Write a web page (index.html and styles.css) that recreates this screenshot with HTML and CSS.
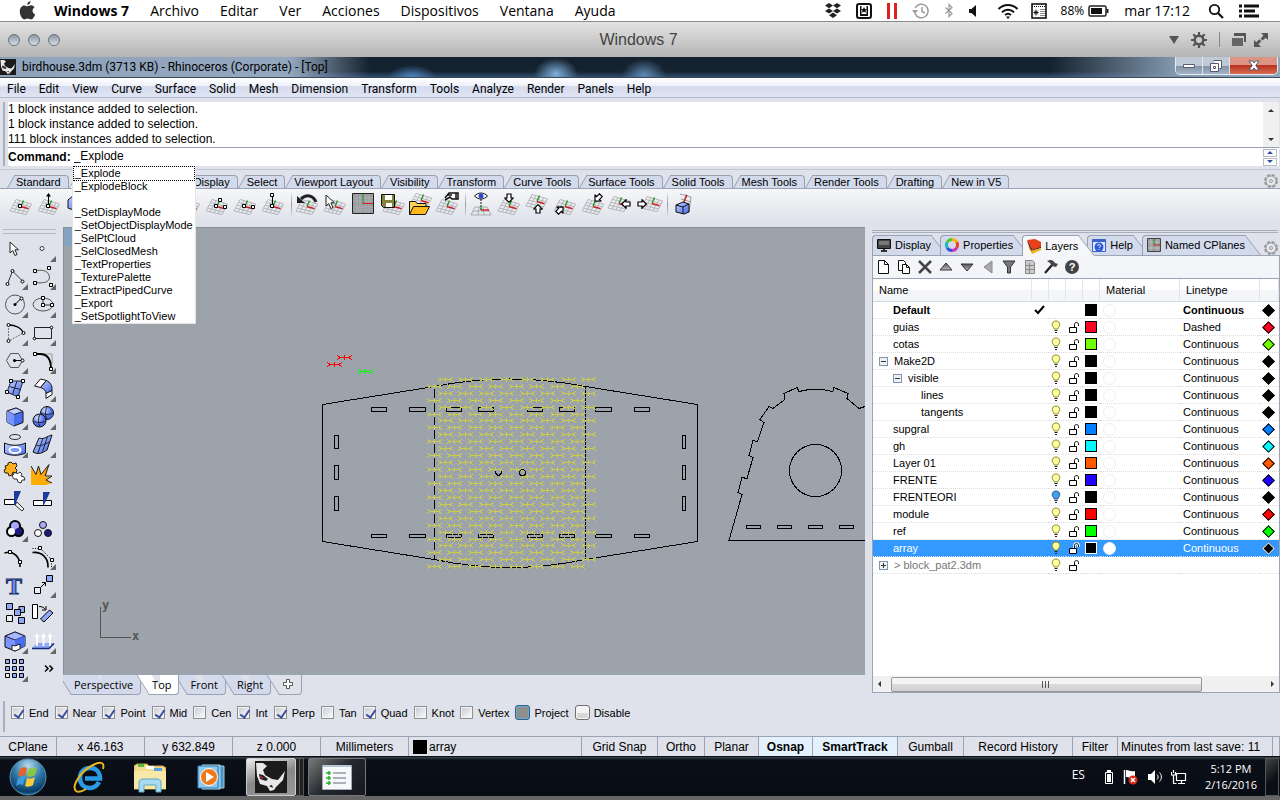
FILE: index.html
```html
<!DOCTYPE html>
<html lang="es">

<head>
    <meta charset="UTF-8">
    <meta name="viewport" content="width=device-width, initial-scale=1.0">
    <title>birdhouse.3dm - Rhinoceros</title>
    <link rel="stylesheet" href="styles.css">
</head>

<body>
    <!-- shared icon shapes -->
    <svg class="sprite" aria-hidden="true">
        <defs>
            <linearGradient id="blue" x1="0" y1="0" x2="1" y2="1"><stop offset="0" stop-color="#c4d2ff"/><stop offset="1" stop-color="#4468e8"/></linearGradient>
            <linearGradient id="fire" x1="1" y1="0" x2="0" y2="1"><stop offset="0" stop-color="#ff9a10"/><stop offset="1" stop-color="#ffb400"/></linearGradient>
            <radialGradient id="ball" cx=".35" cy=".3"><stop offset="0" stop-color="#d5e0ff"/><stop offset="1" stop-color="#4a6ce6"/></radialGradient>
            <radialGradient id="orb" cx=".5" cy=".2" r=".9"><stop offset="0" stop-color="#b9dcec"/><stop offset=".45" stop-color="#2f78a8"/><stop offset=".8" stop-color="#0a3c68"/><stop offset="1" stop-color="#3fc3e8"/></radialGradient>
            <linearGradient id="grey" x1="0" y1="0" x2="0" y2="1"><stop offset="0" stop-color="#555"/><stop offset="1" stop-color="#bbb"/></linearGradient>
        </defs>
        <symbol id="plane" viewBox="0 0 28 28">
            <path d="M9 9.500L24.600 14M7.500 12.400L23.200 16.700M6 15.200L21.800 19.300M4.500 18.100L20.400 22M3 21L19 24.600M9 9.500L3 21M12.900 10.600L7 21.900M16.800 11.700L11 22.800M20.700 12.900L15 23.700M24.600 14L19 24.600" fill="none" stroke="#aeb0b4" stroke-width=".9"/>
            <path d="M16.500 10.500L14 16" stroke="#1a9a1a" stroke-width="1.300"/>
            <path d="M14 16.500L21.500 18.700" stroke="#d01818" stroke-width="1.400"/>
        </symbol>
        <symbol id="dot" viewBox="0 0 4 4"><path d="M.5 .5h3v3h-3z" fill="#fff" stroke="#000"/></symbol>
        <symbol id="arrow" viewBox="0 0 10 10"><path d="M3 1h4v4h2.200L5 9.300.800 5H3z" fill="#fff" stroke="#000" stroke-width="1.200"/></symbol>
        <symbol id="pointer" viewBox="0 0 12 16"><path d="M1 1v11l2.700-2.500 2.200 5 2.200-1-2.200-4.700H9.500z" fill="#fff" stroke="#222"/></symbol>
        <symbol id="gear" viewBox="0 0 16 16"><circle cx="8" cy="8" r="6" fill="none" stroke="#999" stroke-width="2" stroke-dasharray="3.200 1.500"/><circle cx="8" cy="8" r="5" fill="#e6e8ee" stroke="#999"/><circle cx="8" cy="8" r="1.500" fill="none" stroke="#999"/></symbol>
        <symbol id="bulb" viewBox="0 0 10 14"><path d="M5 1C2.500 1 1.200 2.700 1.200 4.600c0 2 1.600 2.400 2 4.400h3.600c.4-2 2-2.400 2-4.400C8.800 2.700 7.500 1 5 1z" fill="#ffffa0" stroke="#8a8a20"/><path d="M3.500 10.500h3M4 12.500h2" stroke="#222"/></symbol>
        <symbol id="bulb-off" viewBox="0 0 10 14"><path d="M5 1C2.500 1 1.200 2.700 1.200 4.600c0 2 1.600 2.400 2 4.400h3.600c.4-2 2-2.400 2-4.400C8.800 2.700 7.500 1 5 1z" fill="#4a9ae8" stroke="#1c5a9a"/><path d="M3.500 10.500h3M4 12.500h2" stroke="#222"/></symbol>
        <symbol id="lock" viewBox="0 0 12 13"><path d="M1.500 6.500h7v5h-7zM6.500 6V3.500c0-2.600 4-2.600 4 0V5" fill="none" stroke="#000"/></symbol>
        <symbol id="lock-sel" viewBox="0 0 12 13"><path d="M1 6h8v6H1z" fill="#fff"/><path d="M6.500 6V3.500c0-2.600 4-2.600 4 0V5" fill="none" stroke="#fff" stroke-width="2.500"/><path d="M1.500 6.500h7v5h-7zM6.500 6V3.500c0-2.600 4-2.600 4 0V5" fill="none" stroke="#000"/></symbol>
        <symbol id="rhino" viewBox="0 0 32 32">
            <path d="M0 0h32v32H0z" fill="#1b1b1b"/>
            <path d="M1 2h7l4 3-4 4 2 5 7 4 6 1 7-9-2 9-7 7-2 3-4 1-3-5-7-2-3-8z" fill="#e8e8ea"/>
            <path d="M4 13l4 1 5 4-2 2-6-2z" fill="#222"/><path d="M5 16l3 1" stroke="#c22" stroke-width="1.500"/>
            <path d="M14 25l3-1 1 3z" fill="#111"/>
        </symbol>
    </svg>

    <header class="mac-bar">
        <svg class="apple" width="17" height="20" viewBox="0 0 17 20"><path d="M11.500 0c.2 2-1.400 3.800-3.200 4C8 2 9.800.300 11.500 0zM8.500 5.200c1 0 1.900-.9 3.500-.9 1.400 0 2.800.7 3.600 2-3 1.700-2.600 5.800.6 7.100-.7 1.800-2.300 5-4.200 5-1.200 0-1.700-.8-3.300-.8-1.500 0-2.100.8-3.200.8-2.100 0-4.700-4.300-4.700-8 0-3.600 2.200-6 4.600-6 1.400 0 2.300.8 3.100.8z" fill="#333"/></svg>
        <nav class="mac-menu">
            <a href="#" class="current">Windows 7</a>
            <a href="#">Archivo</a>
            <a href="#">Editar</a>
            <a href="#">Ver</a>
            <a href="#">Acciones</a>
            <a href="#">Dispositivos</a>
            <a href="#">Ventana</a>
            <a href="#">Ayuda</a>
        </nav>
        <div class="mac-tray">
            <svg width="18" height="16" viewBox="0 0 18 16"><path d="M5 0l4 2.600L5 5.200 1 2.600zM13 0l4 2.600-4 2.600-4-2.600zM1 8l4-2.600L9 8l-4 2.600zM13 5.400L17 8l-4 2.600L9 8zM9 9.600l4 2.600L9 15l-4-2.800z" fill="#222"/></svg>
            <svg width="16" height="16" viewBox="0 0 16 16"><rect x="1" y="1" width="14" height="14" rx="2" fill="#fff" stroke="#111" stroke-width="2"/><path d="M4 3h1.500v8h5V3H12v10H4z" fill="#111"/><path d="M8 4l1 2 2 .2-1.500 1.400.4 2.200L8 8.700l-1.900 1.100.4-2.200L5 6.200 7 6z" fill="#111"/></svg>
            <svg width="12" height="16" viewBox="0 0 12 16"><path d="M1 0h3v16H1zM8 0h3v16H8z" fill="#e02020"/></svg>
            <svg width="18" height="16" viewBox="0 0 18 16"><path d="M3.200 5A6.800 6.800 0 1 1 3 10.500" fill="none" stroke="#999" stroke-width="1.500"/><path d="M0 7h6L3 11z" fill="#999"/><path d="M10 4v4.500l3 1.500" fill="none" stroke="#999" stroke-width="1.500"/></svg>
            <svg width="10" height="16" viewBox="0 0 10 16"><path d="M1.500 4.500l6.500 6L5 13.500v-12l3 3-6.500 6" fill="none" stroke="#999" stroke-width="1.200"/></svg>
            <svg width="10" height="12" viewBox="0 0 10 12"><path d="M1 4h2.500L8 0v12L3.500 8H1z" fill="#111"/></svg>
            <svg class="wifi" width="22" height="16" viewBox="0 0 22 16"><path d="M1.500 6c5.500-5.300 13.500-5.300 19 0M5 9.200c3.500-3.300 8.500-3.300 12 0M8 12c2-1.700 4-1.700 6 0" fill="none" stroke="#111" stroke-width="2"/><path d="M9 13.500h4L11 16z" fill="#111"/></svg>
            <svg width="16" height="16" viewBox="0 0 16 16"><rect x="1" y="1" width="14" height="14" fill="#fff" stroke="#111" stroke-width="1.600"/><path d="M1 3.500h14" stroke="#111" stroke-dasharray="1 1"/><path d="M2.500 9.500h5M5 6.500v6M3.200 7.700l3.600 3.600M6.800 7.700l-3.600 3.600" stroke="#111"/><path d="M9.500 6.500h5M9.500 8.500h5M9.500 10.500h5M9.500 12.500h5" stroke="#111" stroke-dasharray="1 1"/></svg>
            <span class="battery">88%</span>
            <svg class="cell" width="22" height="12" viewBox="0 0 22 12"><rect x="1" y="1" width="17" height="10" rx="1.500" fill="none" stroke="#222" stroke-width="1.500"/><path d="M3 3h11v6H3z" fill="#111"/><path d="M19.500 4v4" stroke="#222" stroke-width="2"/></svg>
            <time>mar 17:12</time>
            <svg width="16" height="16" viewBox="0 0 16 16"><circle cx="6.500" cy="6.500" r="4.700" fill="none" stroke="#111" stroke-width="1.800"/><path d="M10 10l5 5" stroke="#111" stroke-width="2.200"/></svg>
            <svg width="22" height="14" viewBox="0 0 22 14"><path d="M1 2h3M6 2h15M1 7h3M6 7h11M1 12h3M6 12h15" stroke="#111" stroke-width="3"/></svg>
        </div>
    </header>

    <div class="vm-bar">
        <div class="lights"><span></span><span></span><span></span></div>
        <span class="vm-title">Windows 7</span>
        <div class="vm-tools">
            <svg width="10" height="8" viewBox="0 0 10 8"><path d="M0 0h10L5 8z" fill="#555"/></svg>
            <svg width="18" height="18" viewBox="0 0 18 18"><path d="M9 1v16M1 9h16M3.300 3.300l11.400 11.400M14.700 3.300L3.300 14.700" stroke="#555" stroke-width="2.200"/><circle cx="9" cy="9" r="4.300" fill="#ccc" stroke="#555" stroke-width="2.500"/></svg>
            <i></i>
            <svg width="16" height="16" viewBox="0 0 16 16"><path d="M3 1h12v9h-2V4H3z" fill="#555"/><path d="M1 6h11v8H1z" fill="#666"/></svg>
            <svg width="16" height="16" viewBox="0 0 16 16"><path d="M8 1h7v7l-2.300-2.300L9.500 8.500 7.500 6.500l3-3zM1 8l2.300 2.300 3-3 2 2-3 3L8 15H1z" fill="#555"/></svg>
        </div>
    </div>

    <div class="win-title">
        <svg width="16" height="16"><use href="#rhino"/></svg>
        <h1>birdhouse.3dm (3713 KB) - Rhinoceros (Corporate) - [Top]</h1>
        <div class="win-buttons">
            <button type="button" aria-label="Minimize"><svg width="12" height="6"><path d="M.5 1.500h11v3H.5z" fill="#fff" stroke="#555c70"/></svg></button>
            <button type="button" aria-label="Restore"><svg width="12" height="12"><path d="M3.500.5h8v8h-2M.5 3.500h8v8h-8zM3.500 6.500h2v2h-2z" fill="#fff" stroke="#555c70"/></svg></button>
            <button type="button" class="close" aria-label="Close"><svg width="12" height="11" viewBox="0 0 12 11"><path d="M1 1h3.500L6 3l1.500-2H11L7.800 5.500 11 10H7.500L6 8l-1.500 2H1l3.200-4.500z" fill="#fff" stroke="#555c70"/></svg></button>
        </div>
    </div>

    <nav class="app-menu">
        <a href="#">File</a>
        <a href="#">Edit</a>
        <a href="#">View</a>
        <a href="#">Curve</a>
        <a href="#">Surface</a>
        <a href="#">Solid</a>
        <a href="#">Mesh</a>
        <a href="#">Dimension</a>
        <a href="#">Transform</a>
        <a href="#">Tools</a>
        <a href="#">Analyze</a>
        <a href="#">Render</a>
        <a href="#">Panels</a>
        <a href="#">Help</a>
    </nav>

    <section class="command">
        <div class="history">
            <div class="lines">
                <p>1 block instance added to selection.</p>
                <p>1 block instance added to selection.</p>
                <p>111 block instances added to selection.</p>
            </div>
            <div class="scroll-v"><b class="up"></b><b class="down"></b></div>
        </div>
        <div class="prompt">
            <label for="cmd">Command:</label>
            <div class="entry">
                <input type="text" id="cmd" value="_Explode">
                <ul class="suggest">
                    <li class="focus">_Explode</li>
                    <li>_ExplodeBlock</li>
                    <li></li>
                    <li>_SetDisplayMode</li>
                    <li>_SetObjectDisplayMode</li>
                    <li>_SelPtCloud</li>
                    <li>_SelClosedMesh</li>
                    <li>_TextProperties</li>
                    <li>_TexturePalette</li>
                    <li>_ExtractPipedCurve</li>
                    <li>_Export</li>
                    <li>_SetSpotlightToView</li>
                </ul>
            </div>
            <div class="spin"><button type="button" aria-label="Previous"><b class="up"></b></button><button type="button" aria-label="Next"><b class="down"></b></button></div>
        </div>
    </section>

    <section class="toolbars">
        <div class="tool-tabs">
            <button type="button">Standard</button>
            <button type="button" class="active blank" aria-label="CPlanes"></button>
            <button type="button" class="blank" aria-label="Set View"></button>
            <button type="button">Display</button>
            <button type="button">Select</button>
            <button type="button">Viewport Layout</button>
            <button type="button">Visibility</button>
            <button type="button">Transform</button>
            <button type="button">Curve Tools</button>
            <button type="button">Surface Tools</button>
            <button type="button">Solid Tools</button>
            <button type="button">Mesh Tools</button>
            <button type="button">Render Tools</button>
            <button type="button">Drafting</button>
            <button type="button">New in V5</button>
            <svg class="options" width="16" height="16"><use href="#gear"/></svg>
        </div>
        <div class="tools">
            <button type="button" aria-label="Set origin"><svg viewBox="0 0 28 28"><use href="#plane"/><use href="#dot" x="11" y="14" width="4" height="4"/></svg></button>
            <button type="button" aria-label="Set elevation"><svg viewBox="0 0 28 28"><use href="#plane"/><path d="M13.500 15V4" stroke="#000"/><path d="M11 6.500L13.500 3 16 6.500z"/><use href="#dot" x="11" y="14" width="4" height="4"/></svg></button>
            <button type="button" aria-label="To object"><svg viewBox="0 0 28 28"><path d="M5 10l6-5 12 3v9l-7 5-11-4z" fill="url(#blue)" stroke="#111"/></svg></button>
            <button type="button" aria-label="To surface"><svg viewBox="0 0 28 28"><use href="#plane"/></svg></button>
            <button type="button" aria-label="To curve"><svg viewBox="0 0 28 28"><use href="#plane"/></svg></button>
            <button type="button" aria-label="Rotate"><svg viewBox="0 0 28 28"><use href="#plane"/></svg></button>
            <button type="button" aria-label="Vertical"><svg viewBox="0 0 28 28"><use href="#plane"/></svg></button>
            <button type="button" aria-label="Three points"><svg viewBox="0 0 28 28"><use href="#plane"/><use href="#dot" x="11" y="14" width="4" height="4"/><use href="#dot" x="15" y="8" width="4" height="4"/><use href="#dot" x="20" y="15" width="4" height="4"/></svg></button>
            <button type="button" aria-label="X axis"><svg viewBox="0 0 28 28"><use href="#plane"/><use href="#dot" x="11" y="14" width="4" height="4"/><use href="#dot" x="20" y="15" width="4" height="4"/></svg></button>
            <button type="button" aria-label="Z axis"><svg viewBox="0 0 28 28"><use href="#plane"/><path d="M13.500 14V6" stroke="#000"/><use href="#dot" x="11" y="14" width="4" height="4"/><use href="#dot" x="11" y="3" width="4" height="4"/></svg></button>
            <i></i>
            <button type="button" aria-label="Previous plane"><svg viewBox="0 0 28 28"><use href="#plane"/><path d="M23 12C20 5 13 4 8 9" fill="none" stroke="#222" stroke-width="3"/><path d="M4 6v7h8z" fill="#222"/></svg></button>
            <button type="button" aria-label="Select plane"><svg viewBox="0 0 28 28"><use href="#plane"/><use href="#pointer" x="4" y="4" width="12" height="16"/></svg></button>
            <button type="button" aria-label="World plane"><svg viewBox="0 0 28 28"><path d="M3.500 3.500h21v20h-21z" fill="#9a9ca0" stroke="#222"/><path d="M8 4v19M11 4v19M17 4v19M20 4v19M4 8h20M4 11h20M4 17h20M4 20h20" stroke="#aaacb0"/><path d="M14 4v10" stroke="#1a9a1a"/><path d="M14 13.500h10" stroke="#e01818"/></svg></button>
            <button type="button" aria-label="Save plane"><svg viewBox="0 0 28 28"><use href="#plane" x="3" width="28" height="28"/><path d="M4.500 4.500h13v13h-11l-2-2z" fill="#85823a" stroke="#111"/><path d="M8 5h7v5H8zM9 13h6v4H9z" fill="#fff"/></svg></button>
            <button type="button" aria-label="Open plane"><svg viewBox="0 0 28 28"><use href="#plane" x="2" y="-6" width="28" height="28"/><path d="M4.500 24V11.500h6l1.500 2h9V17" fill="#ffd25a" stroke="#111"/><path d="M4.500 24.500l4-8h16l-4 8z" fill="#ffb81c" stroke="#111"/></svg></button>
            <button type="button" aria-label="Grid options"><svg viewBox="0 0 28 28"><use href="#plane"/><path d="M12 8l4-5h7v6h-4l-2-2-5 3M23 3h2v6h-2M15 5l4 0" fill="#fff" stroke="#111" stroke-width="1.500"/></svg></button>
            <i></i>
            <button type="button" aria-label="Plan view"><svg viewBox="0 0 28 28"><path d="M8 17h12l4 8H4zM6 21h16M12 17l-1 8M16 17l1 8" fill="none" stroke="#aaa"/><path d="M14 9v12" stroke="#111" stroke-dasharray="2 1"/><path d="M14 20h8" stroke="#d01818" stroke-width="1.400"/><path d="M14 20v-4" stroke="#1a9a1a"/><path d="M7.500 6c4-4 9-4 13 0-4 4-9 4-13 0z" fill="#fff" stroke="#111"/><circle cx="14" cy="6" r="2.500" fill="#2848d8"/></svg></button>
            <button type="button" aria-label="Top plane"><svg viewBox="0 0 28 28"><use href="#plane"/><use href="#arrow" x="9" y="3" width="10" height="10"/></svg></button>
            <button type="button" aria-label="Bottom plane"><svg viewBox="0 0 28 28"><use href="#plane" y="-5" width="28" height="28"/><g transform="rotate(180 15 20)"><use href="#arrow" x="10" y="16" width="10" height="10"/></g></svg></button>
            <button type="button" aria-label="Left plane"><svg viewBox="0 0 28 28"><use href="#plane"/><g transform="rotate(225 9 20)"><use href="#arrow" x="4" y="15" width="10" height="10"/></g></svg></button>
            <button type="button" aria-label="Right plane"><svg viewBox="0 0 28 28"><use href="#plane"/><g transform="rotate(45 19 8)"><use href="#arrow" x="14" y="3" width="10" height="10"/></g></svg></button>
            <button type="button" aria-label="Front plane"><svg viewBox="0 0 28 28"><use href="#plane" x="-2" y="-3" width="28" height="28"/><g transform="rotate(90 19 14)"><use href="#arrow" x="14" y="9" width="10" height="10"/></g></svg></button>
            <button type="button" aria-label="Back plane"><svg viewBox="0 0 28 28"><use href="#plane" x="3" y="-3" width="28" height="28"/><g transform="rotate(270 7 14)"><use href="#arrow" x="2" y="9" width="10" height="10"/></g></svg></button>
            <i></i>
            <button type="button" aria-label="Gumball plane"><svg viewBox="0 0 28 28"><path d="M11 4l11 3-2 15M12 9l10 3M17 4l-2 8" fill="none" stroke="#999"/><path d="M14 14l4-9" stroke="#d01818" stroke-width="1.300"/><path d="M7 15l7-3 6 2v8l-5 2-8-2z" fill="url(#blue)" stroke="#111"/><path d="M7 15l7 2 6-3M14 17v7" fill="none" stroke="#111"/></svg></button>
        </div>
    </section>

    <main class="workspace">
        <aside class="palette">
            <button type="button" aria-label="Select"><svg viewBox="0 0 28 28"><use href="#pointer" x="9" y="7" width="12" height="16"/></svg></button>
            <button type="button" class="more" aria-label="Point"><svg viewBox="0 0 28 28"><circle cx="14" cy="14.500" r="2" fill="#fff" stroke="#333"/></svg></button>
            <button type="button" class="more" aria-label="Polyline"><svg viewBox="0 0 28 28"><path d="M7.500 22l5-13 10 10" fill="none" stroke="#333"/><g fill="#fff" stroke="#000"><circle cx="7.500" cy="22" r="1.500"/><circle cx="12.500" cy="9" r="1.500"/><circle cx="22.500" cy="19.500" r="1.500"/></g></svg></button>
            <button type="button" class="more" aria-label="Curve"><svg viewBox="0 0 28 28"><path d="M7 9c6-1.500 12-1 14 4 2 6-3 9-14 7.500" fill="none" stroke="#555"/><use href="#dot" x="5" y="7" width="4" height="4"/><use href="#dot" x="19" y="4" width="4" height="4"/><use href="#dot" x="5" y="19" width="4" height="4"/><use href="#dot" x="21" y="21" width="4" height="4"/></svg></button>
            <button type="button" class="more" aria-label="Circle"><svg viewBox="0 0 28 28"><circle cx="15" cy="14.500" r="9.500" fill="none" stroke="#555"/><path d="M15 14.500l6-6" stroke="#000"/><circle cx="15" cy="14.500" r="1.500"/><circle cx="21.500" cy="8.500" r="1.500" fill="#fff" stroke="#000"/></svg></button>
            <button type="button" class="more" aria-label="Ellipse"><svg viewBox="0 0 28 28"><ellipse cx="15" cy="14.500" rx="10" ry="6.500" fill="none" stroke="#555"/><path d="M15 8v7h9" fill="none" stroke="#333"/><use href="#dot" x="13" y="6" width="4" height="4"/><use href="#dot" x="13" y="13" width="4" height="4"/><use href="#dot" x="22" y="13" width="4" height="4"/></svg></button>
            <button type="button" class="more" aria-label="Arc"><svg viewBox="0 0 28 28"><path d="M8.500 7v16l15-8" fill="none" stroke="#777" stroke-dasharray="2 1"/><path d="M8.500 7c7 0 13 3 15 8" fill="none" stroke="#000" stroke-width="1.300"/><g fill="#fff" stroke="#000"><circle cx="8.500" cy="7" r="1.500"/><circle cx="23.500" cy="15" r="1.500"/><circle cx="8.500" cy="23" r="1.500"/></g></svg></button>
            <button type="button" class="more" aria-label="Rectangle"><svg viewBox="0 0 28 28"><path d="M6.500 9.500h17v11h-17z" fill="none" stroke="#222"/><g fill="#fff" stroke="#000"><circle cx="23.500" cy="9.500" r="1.300"/><circle cx="6.500" cy="20.500" r="1.300"/></g></svg></button>
            <button type="button" class="more" aria-label="Polygon"><svg viewBox="0 0 28 28"><path d="M6.500 14.500l4-7h8l4 7-4 7h-8z" fill="none" stroke="#555"/><path d="M14 14.500h9" stroke="#000"/><circle cx="14.500" cy="14.500" r="1.500"/><circle cx="22.500" cy="14.500" r="1.500" fill="#fff" stroke="#000"/></svg></button>
            <button type="button" class="more" aria-label="Fillet"><svg viewBox="0 0 28 28"><path d="M12 8h12v10" fill="none" stroke="#999"/><path d="M7 8h5c8 0 11 5 11 15" fill="none" stroke="#000" stroke-width="1.800"/><use href="#dot" x="5" y="6" width="4" height="4"/><use href="#dot" x="21" y="21" width="4" height="4"/></svg></button>
            <button type="button" class="more" aria-label="Surface"><svg viewBox="0 0 28 28"><path d="M11 7h12l-5 16-11-5z" fill="url(#blue)" stroke="#223"/><path d="M17 7l-4.500 13.500M9 12.500l11.500 3" stroke="#223" fill="none"/><use href="#dot" x="9" y="5" width="4" height="4"/><use href="#dot" x="21" y="5" width="4" height="4"/><use href="#dot" x="16" y="21" width="4" height="4"/><use href="#dot" x="5" y="16" width="4" height="4"/></svg></button>
            <button type="button" class="more" aria-label="Blend surface"><svg viewBox="0 0 28 28"><path d="M6.500 12l6-7 6 1.500-6 7z" fill="#fff" stroke="#111"/><path d="M18.500 6.500c4 2 6 5 5.500 10l-6 3c0-3-2-5-5.500-6z" fill="url(#blue)" stroke="#111"/><path d="M24 16.500v4l-6 4v-5z" fill="#fff" stroke="#111"/></svg></button>
            <button type="button" class="more" aria-label="Box"><svg viewBox="0 0 28 28"><path d="M7 9l9-3 7 3.500v11L14 24l-7-4z" fill="#4a6cee" stroke="#111"/><path d="M7 9l9-3 7 3.500-9 3z" fill="#c4d2ff" stroke="#223"/><path d="M7 9l7 3.500V24l-7-4z" fill="#7b95ff"/></svg></button>
            <button type="button" class="more" aria-label="Boolean"><svg viewBox="0 0 28 28"><circle cx="19" cy="11" r="6.500" fill="url(#ball)" stroke="#111"/><circle cx="11.500" cy="18.500" r="6.500" fill="url(#ball)" stroke="#111"/><path d="M5 19c4 2 9 2 13 0M12 12c-2 4-2 9 0 13M13 11c4 2 8 2 12 0M19 5c-2 4-2 8 0 12" fill="none" stroke="#223"/></svg></button>
            <button type="button" class="more" aria-label="Project"><svg viewBox="0 0 28 28"><ellipse cx="15" cy="7" rx="5.500" ry="2.500" fill="none" stroke="#333"/><path d="M4.500 13c6 3 15 3 21 0v10c-6 3-15 3-21 0z" fill="url(#blue)" stroke="#111"/><ellipse cx="15" cy="20" rx="5.500" ry="3" fill="#7b95ff" stroke="#fff" stroke-width="2"/></svg></button>
            <button type="button" class="more" aria-label="Mesh"><svg viewBox="0 0 28 28"><path d="M11 8c5 2 8-2 13-3l-5 15c-5 3-8 5-14 2z" fill="url(#blue)" stroke="#111"/><path d="M8 15c5 2 8-1 14-3M15 8l-5 15M19.500 6.500l-5 15" fill="none" stroke="#223"/></svg></button>
            <button type="button" aria-label="Join"><svg viewBox="0 0 28 28"><path d="M13 13l3 0 1 3 3-2 2 2-1 2 3 1 1 3-3 0-1 3-3-1-1-3-3 0-2-3 2-2z" fill="#fff" stroke="#333"/><path d="M5 8l3-1 0-2 3-1 2 2 3-1 1 3-2 2 2 2-1 3-3-1-1 3-3 1-1-3-3 0-1-3 2-1z" fill="#ffb01c" stroke="#222"/></svg></button>
            <button type="button" aria-label="Explode"><svg viewBox="0 0 28 28"><path d="M3 8l5 8.500L10.500 8l2.500 8.500L21 6.500 18.500 17l-3 2 8.500-.5-6 3.500 6 3-6 2H3z" fill="url(#fire)"/><path d="M3 8l5 8.500L10.500 8l2.500 8.500L21 6.500 17 18l7 0-6 4 6 3" fill="none" stroke="#222"/></svg></button>
            <button type="button" aria-label="Trim"><svg viewBox="0 0 28 28"><path d="M4.500 13.500h11v5h-11z" fill="#fff" stroke="#000"/><path d="M17 16l7 7-2 2-7-6z" fill="#eee" stroke="#333"/><path d="M14 5h7l-6 14h-1z" fill="#1c3c9c"/></svg></button>
            <button type="button" aria-label="Split"><svg viewBox="0 0 28 28"><path d="M5.500 14.500h18v5h-18z" fill="#fff" stroke="#000"/><path d="M15 6h7l-6 13h-1z" fill="#1c3c9c"/></svg></button>
            <button type="button" class="more" aria-label="Group"><svg viewBox="0 0 28 28"><g stroke="#000" stroke-width="2"><circle cx="15" cy="12" r="5"/><circle cx="11.500" cy="17.500" r="4.500"/><circle cx="18.500" cy="17.500" r="4.500"/></g><circle cx="15" cy="12" r="4" fill="#a8a8ff"/><circle cx="11.500" cy="17.500" r="3.500" fill="#fff"/><circle cx="18.500" cy="17.500" r="3.500" fill="#1c1c80"/></svg></button>
            <button type="button" aria-label="Ungroup"><svg viewBox="0 0 28 28"><g stroke="#111"><circle cx="15" cy="11" r="3.500" fill="#a8a8ff"/><circle cx="10" cy="19" r="3.500" fill="#fff"/><circle cx="20" cy="19" r="3.500" fill="#1c1c80"/></g></svg></button>
            <button type="button" aria-label="Edit points"><svg viewBox="0 0 28 28"><path d="M4.500 11c9-3 16 4 15.500 14" fill="none" stroke="#000" stroke-width="1.600"/><use href="#dot" x="8" y="8" width="4" height="4"/><use href="#dot" x="18" y="18" width="4" height="4"/></svg></button>
            <button type="button" class="more" aria-label="Control points"><svg viewBox="0 0 28 28"><path d="M4.500 6.500h8l11 11v8" fill="none" stroke="#000" stroke-dasharray="1 1.500"/><path d="M4.500 10.500c9-1 16 5 15.500 15" fill="none" stroke="#000" stroke-width="1.600"/><use href="#dot" x="10" y="4" width="4" height="4"/><use href="#dot" x="22" y="16" width="4" height="4"/></svg></button>
            <button type="button" aria-label="Text"><svg viewBox="0 0 28 28"><text x="6" y="24" class="letter">T</text></svg></button>
            <button type="button" class="more" aria-label="Move"><svg viewBox="0 0 28 28"><path d="M6.500 17.500h6v6h-6z" fill="#eee" stroke="#000"/><path d="M18.500 5.500h6v6h-6z" fill="#8fa8f8" stroke="#000"/><path d="M13 17l4-4M14 12.500h3.500V16" fill="none" stroke="#000"/></svg></button>
            <button type="button" aria-label="Array"><svg viewBox="0 0 28 28"><g fill="#8fa8f8" stroke="#000"><path d="M6.500 5.500h6v6h-6zM19 8.500h5.500v6H19z"/><path d="M14.500 11.500h6v6h-6zM18.500 19.500h6v6h-6z"/><path d="M6.500 17.500h6v6h-6z" fill="#eee"/></g></svg></button>
            <button type="button" aria-label="Rotate"><svg viewBox="0 0 28 28"><path d="M4.500 6.500h5v14h-5z" fill="#fff" stroke="#000"/><path d="M12.500 21l9-9 3.500 3-9 9z" fill="#8fa8f8" stroke="#000"/><path d="M11 8.500c3 0 5 1 6.500 3M18 8v4h-4" fill="none" stroke="#000"/></svg></button>
            <button type="button" class="more" aria-label="Solid tools"><svg viewBox="0 0 28 28"><path d="M5 10l10-4 10 4v10l-10 5-10-4z" fill="#7b95ff" stroke="#111"/><path d="M5 10l10-4 10 4-10 4z" fill="#a5b8ff" stroke="#223"/><path d="M15 14l10-4v10l-10 5z" fill="#4a6cee"/><path d="M12 19l3 1 5-2v5l-5 2-3-1z" fill="#fff" stroke="#222"/></svg></button>
            <button type="button" class="more" aria-label="Offset"><svg viewBox="0 0 28 28"><path d="M4 22l5-5h17l-5 5z" fill="#8fa8f8"/><path d="M4 22.500h17l5-5" fill="none" stroke="#112a78" stroke-width="1.500"/><path d="M9 20V10M15.500 20V10M22 20V10" stroke="#fff" stroke-width="1.800"/><path d="M6.500 11L9 7l2.500 4zM13 11l2.500-4 2.500 4zM19.500 11L22 7l2.500 4z" fill="#fff"/></svg></button>
            <button type="button" class="more" aria-label="Grid"><svg viewBox="0 0 28 28"><g fill="#8fa8f8" stroke="#000"><path d="M5.500 5.500h4v4h-4zM12.500 5.500h4v4h-4zM19.500 5.500h4v4h-4zM5.500 12.500h4v4h-4zM12.500 12.500h4v4h-4zM19.500 12.500h4v4h-4zM12.500 19.500h4v4h-4zM19.500 19.500h4v4h-4z"/><path d="M5.500 19.500h4v4h-4z" fill="#eee"/></g></svg></button>
            <button type="button" aria-label="More tools"><svg viewBox="0 0 28 28"><path d="M17 11.500l3 3-3 3M21.500 11.500l3 3-3 3" fill="none" stroke="#000" stroke-width="1.500"/></svg></button>
        </aside>

        <section class="view">
            <div class="canvas">
                <span class="view-name"></span>
                <svg width="100%" height="100%" shape-rendering="crispEdges">
                    <defs>
                        <path id="knot" d="M-7-1.500h1M-6-.5h2M-5 .5h11M-6 1.500h2M-7 2.500h1M7-1.500h1M5-.5h2M5 1.500h2M7 2.500h1M.5-2v5" fill="none"/>
                        <g id="row">
                            <use href="#knot"/><use href="#knot" x="20"/><use href="#knot" x="41"/><use href="#knot" x="61"/>
                            <use href="#knot" x="82"/><use href="#knot" x="102"/><use href="#knot" x="123"/><use href="#knot" x="143"/>
                        </g>
                        <g id="pair"><use href="#row" x="11"/><use href="#row" y="7"/></g>
                    </defs>
                    <g transform="translate(-64 -228)">
                        <g fill="none" stroke="#000">
                            <path d="M322.500 404.500L434.500 386.500Q508.500 371.500 585.500 386.500L697.500 404.500V541.500L585.500 559.500Q508.500 575.500 434.500 559.500L322.500 541.500z"/>
                            <path d="M434.500 386v174"/>
                            <path d="M585.500 386v174" stroke-dasharray="3 1"/>
                            <path d="M371.500 407.500h15v4h-15zM409.500 407.500h16v4h-16zM446.500 407.500h15v4h-15zM478.500 407.500h15v4h-15zM527.500 407.500h15v4h-15zM559.500 407.500h15v4h-15zM595.500 407.500h16v4h-16zM634.500 407.500h15v4h-15z"/>
                            <path d="M371.500 534.500h15v3h-15zM409.500 534.500h16v3h-16zM446.500 534.500h15v3h-15zM478.500 534.500h15v3h-15zM527.500 534.500h15v3h-15zM559.500 534.500h15v3h-15zM595.500 534.500h16v3h-16zM634.500 534.500h15v3h-15z"/>
                            <path d="M334.500 435.500h4v13h-4zM334.500 465.500h4v14h-4zM334.500 496.500h4v14h-4zM682.500 435.500h3v13h-3zM682.500 465.500h3v14h-3zM682.500 496.500h3v14h-3z"/>
                            <path d="M865 406.500l-6 2-12-10 1-5-14-6-1 4-11-2h-13l-10 2-2-4-13 6 1 6-12 9-4-2-9 13 4 3-6.500 19-4.500-1-4 15 4 2-6 21-5-1-4 15 4 2-13 46H865"/>
                            <path d="M746.500 525.500h14v3h-14zM777.500 525.500h14v3h-14zM808.500 525.500h14v3h-14zM839.500 525.500h14v3h-14z"/>
                            <circle cx="815.500" cy="470.500" r="26"/>
                        </g>
                        <g stroke="#cccc4c">
                            <use href="#pair" x="434" y="379"/><use href="#pair" x="434" y="393"/><use href="#pair" x="434" y="407"/><use href="#pair" x="434" y="420"/>
                            <use href="#pair" x="434" y="434"/><use href="#pair" x="434" y="448"/><use href="#pair" x="434" y="462"/><use href="#pair" x="434" y="476"/>
                            <use href="#pair" x="434" y="490"/><use href="#pair" x="434" y="504"/><use href="#pair" x="434" y="518"/><use href="#pair" x="434" y="532"/>
                            <use href="#pair" x="434" y="545"/><use href="#pair" x="434" y="559"/>
                        </g>
                        <g fill="none" stroke="#000"><circle cx="522.500" cy="472.500" r="3"/><path d="M495.500 471v2l2 2h2l2-2v-2"/></g>
                        <g stroke="#f00"><use href="#knot" x="334" y="364"/><use href="#knot" x="344" y="357"/></g>
                        <use href="#knot" x="365" y="371" stroke="#0f0"/>
                        <path d="M100.500 607v30.500h30" fill="none" stroke="#555"/>
                        <text x="102" y="609" class="axis">y</text>
                        <text x="132" y="640" class="axis">x</text>
                    </g>
                </svg>
            </div>
            <div class="view-tabs">
                <button type="button">Perspective</button>
                <button type="button" class="active">Top</button>
                <button type="button">Front</button>
                <button type="button">Right</button>
                <button type="button" class="add" aria-label="New viewport"><svg width="10" height="10"><path d="M3.500.5h3v3h3v3h-3v3h-3v-3h-3v-3h3z" fill="#fff" stroke="#555"/></svg></button>
            </div>
        </section>

        <aside class="panel">
            <div class="grip"></div>
            <div class="panel-tabs">
                <button type="button"><svg width="16" height="16"><path d="M1.500 2.500h13v9h-13z" fill="#444" stroke="#111"/><path d="M3 4h10v4H3z" fill="#777"/><path d="M5 14h6M8 12v2" stroke="#333" stroke-width="2"/></svg>Display</button>
                <button type="button"><svg width="16" height="16" viewBox="0 0 16 16" fill="none" stroke-width="3"><path d="M8 2.500a5.500 5.500 0 0 1 4.800 2.800" stroke="#ffb000"/><path d="M12.800 5.300a5.500 5.500 0 0 1 0 5.400" stroke="#e8402c"/><path d="M12.800 10.700A5.500 5.500 0 0 1 8 13.500" stroke="#d030c0"/><path d="M8 13.500a5.500 5.500 0 0 1-4.800-2.800" stroke="#3050e0"/><path d="M3.200 10.700a5.500 5.500 0 0 1 0-5.400" stroke="#20b8c0"/><path d="M3.200 5.300A5.500 5.500 0 0 1 8 2.500" stroke="#50c830"/></svg>Properties</button>
                <button type="button" class="active"><svg width="16" height="16"><path d="M1 3l4 10 10-3V5l-9 3z" fill="#222"/><path d="M1 7l5 6 9-3v2l-9 4z" fill="#f0b020"/><path d="M1 2l8-1 6 3v5l-9 3z" fill="#e8401c"/></svg>Layers</button>
                <button type="button"><svg width="16" height="16"><path d="M1.500 2.500h13v12h-13z" fill="#dfe8ff" stroke="#3a62c8"/><path d="M2 3h12v2H2z" fill="#3a62c8"/><circle cx="8" cy="10" r="4.500" fill="#2c5ad8"/><path d="M6.500 9c0-2 3-2 3 0 0 1-1.500 1-1.500 2M8 12v1" fill="none" stroke="#fff"/></svg>Help</button>
                <button type="button"><svg width="16" height="16"><path d="M1.500 1.500h13v13h-13z" fill="#9a9ca0" stroke="#444"/><path d="M5 2v12M11 2v12M2 5h12M2 11h12" stroke="#bbb"/><path d="M8 2v6" stroke="#1a9a1a"/><path d="M8 8h6" stroke="#d01818"/></svg>Named CPlanes</button>
                <svg class="options" width="16" height="16"><use href="#gear"/></svg>
            </div>
            <div class="panel-tools">
                <button type="button" aria-label="New layer"><svg width="16" height="16"><path d="M3.500 1.500h6l4 4v9h-10z" fill="#fff" stroke="#111"/><path d="M9.500 1.500v4h4" fill="none" stroke="#111"/></svg></button>
                <button type="button" aria-label="New sublayer"><svg width="16" height="16"><path d="M2.500 1.500h5l2 2v8h-7z" fill="#fff" stroke="#111"/><path d="M6.500 5.500h4l3 3v6h-7z" fill="#fff" stroke="#111"/><path d="M10.500 5.500v3h3" fill="none" stroke="#111"/></svg></button>
                <button type="button" aria-label="Delete"><svg width="16" height="16"><path d="M2 2l12 12M14 2L2 14" stroke="#444" stroke-width="2.500"/></svg></button>
                <button type="button" aria-label="Move up"><svg width="16" height="16"><path d="M8 4l6 7H2z" fill="url(#grey)" stroke="#333"/></svg></button>
                <button type="button" aria-label="Move down"><svg width="16" height="16"><path d="M2 5h12l-6 7z" fill="url(#grey)" stroke="#333"/></svg></button>
                <button type="button" aria-label="Move left"><svg width="16" height="16"><path d="M4 8l8-6v12z" fill="#aaa" stroke="#888"/></svg></button>
                <button type="button" aria-label="Filter"><svg width="16" height="16"><path d="M2 2h12L9.500 8v6h-3V8z" fill="#777" stroke="#333"/></svg></button>
                <button type="button" aria-label="Columns"><svg width="16" height="16"><path d="M3.500 1.500h7l2 2v11h-9zM3 6.500h9M3 10.500h9M7.500 4v10" fill="#ccc" stroke="#888"/></svg></button>
                <button type="button" aria-label="Tools"><svg width="16" height="16"><path d="M2 14L9 6" stroke="#222" stroke-width="2.200"/><path d="M4 2c4-2 6-1 8 2l3 1-2 3-4-1-2-3z" fill="#444"/></svg></button>
                <button type="button" aria-label="Help"><svg width="16" height="16"><circle cx="8" cy="8" r="7" fill="#444"/><text x="8" y="12" class="q">?</text></svg></button>
            </div>
            <div class="layers">
                <table>
                    <colgroup><col><col class="n"><col class="n"><col class="n"><col class="n"><col class="w"><col class="w"><col class="e"></colgroup>
                    <thead>
                        <tr><th>Name</th><th></th><th></th><th></th><th></th><th>Material</th><th>Linetype</th><th></th></tr>
                    </thead>
                    <tbody>
                        <tr class="bold"><td class="l1">Default</td><td><svg width="12" height="10"><path d="M1 5l3 3 6-7" fill="none" stroke="#000" stroke-width="2"/></svg></td><td></td><td></td><td><i class="box"></i></td><td><i class="mat"></i></td><td>Continuous</td><td><i class="dia"></i></td></tr>
                        <tr class="crimson"><td class="l1">guias</td><td></td><td><svg width="10" height="14"><use href="#bulb"/></svg></td><td><svg width="12" height="13"><use href="#lock"/></svg></td><td><i class="box"></i></td><td><i class="mat"></i></td><td>Dashed</td><td><i class="dia"></i></td></tr>
                        <tr class="lime"><td class="l1">cotas</td><td></td><td><svg width="10" height="14"><use href="#bulb"/></svg></td><td><svg width="12" height="13"><use href="#lock"/></svg></td><td><i class="box"></i></td><td><i class="mat"></i></td><td>Continuous</td><td><i class="dia"></i></td></tr>
                        <tr><td class="l0"><i class="fold"></i>Make2D</td><td></td><td><svg width="10" height="14"><use href="#bulb"/></svg></td><td><svg width="12" height="13"><use href="#lock"/></svg></td><td><i class="box"></i></td><td><i class="mat"></i></td><td>Continuous</td><td><i class="dia"></i></td></tr>
                        <tr><td class="l1"><i class="fold"></i>visible</td><td></td><td><svg width="10" height="14"><use href="#bulb"/></svg></td><td><svg width="12" height="13"><use href="#lock"/></svg></td><td><i class="box"></i></td><td><i class="mat"></i></td><td>Continuous</td><td><i class="dia"></i></td></tr>
                        <tr><td class="l3">lines</td><td></td><td><svg width="10" height="14"><use href="#bulb"/></svg></td><td><svg width="12" height="13"><use href="#lock"/></svg></td><td><i class="box"></i></td><td><i class="mat"></i></td><td>Continuous</td><td><i class="dia"></i></td></tr>
                        <tr><td class="l3">tangents</td><td></td><td><svg width="10" height="14"><use href="#bulb"/></svg></td><td><svg width="12" height="13"><use href="#lock"/></svg></td><td><i class="box"></i></td><td><i class="mat"></i></td><td>Continuous</td><td><i class="dia"></i></td></tr>
                        <tr class="azure"><td class="l1">supgral</td><td></td><td><svg width="10" height="14"><use href="#bulb"/></svg></td><td><svg width="12" height="13"><use href="#lock"/></svg></td><td><i class="box"></i></td><td><i class="mat"></i></td><td>Continuous</td><td><i class="dia"></i></td></tr>
                        <tr class="cyan"><td class="l1">gh</td><td></td><td><svg width="10" height="14"><use href="#bulb"/></svg></td><td><svg width="12" height="13"><use href="#lock"/></svg></td><td><i class="box"></i></td><td><i class="mat"></i></td><td>Continuous</td><td><i class="dia"></i></td></tr>
                        <tr class="orange"><td class="l1">Layer 01</td><td></td><td><svg width="10" height="14"><use href="#bulb"/></svg></td><td><svg width="12" height="13"><use href="#lock"/></svg></td><td><i class="box"></i></td><td><i class="mat"></i></td><td>Continuous</td><td><i class="dia"></i></td></tr>
                        <tr class="blue"><td class="l1">FRENTE</td><td></td><td><svg width="10" height="14"><use href="#bulb"/></svg></td><td><svg width="12" height="13"><use href="#lock"/></svg></td><td><i class="box"></i></td><td><i class="mat"></i></td><td>Continuous</td><td><i class="dia"></i></td></tr>
                        <tr><td class="l1">FRENTEORI</td><td></td><td><svg width="10" height="14"><use href="#bulb-off"/></svg></td><td><svg width="12" height="13"><use href="#lock"/></svg></td><td><i class="box"></i></td><td><i class="mat"></i></td><td>Continuous</td><td><i class="dia"></i></td></tr>
                        <tr class="red"><td class="l1">module</td><td></td><td><svg width="10" height="14"><use href="#bulb"/></svg></td><td><svg width="12" height="13"><use href="#lock"/></svg></td><td><i class="box"></i></td><td><i class="mat"></i></td><td>Continuous</td><td><i class="dia"></i></td></tr>
                        <tr class="green"><td class="l1">ref</td><td></td><td><svg width="10" height="14"><use href="#bulb"/></svg></td><td><svg width="12" height="13"><use href="#lock"/></svg></td><td><i class="box"></i></td><td><i class="mat"></i></td><td>Continuous</td><td><i class="dia"></i></td></tr>
                        <tr class="selected"><td class="l1">array</td><td></td><td><svg width="10" height="14"><use href="#bulb"/></svg></td><td><svg width="12" height="13"><use href="#lock-sel"/></svg></td><td><i class="box"></i></td><td><i class="mat"></i></td><td>Continuous</td><td><i class="dia"></i></td></tr>
                        <tr class="dim"><td class="l0"><i class="fold plus"></i>&gt; block_pat2.3dm</td><td></td><td><svg width="10" height="14"><use href="#bulb"/></svg></td><td><svg width="12" height="13"><use href="#lock"/></svg></td><td></td><td></td><td></td><td></td></tr>
                    </tbody>
                </table>
            </div>
            <div class="scroll-h"><b class="left"></b><div class="track"><div class="thumb"><i></i></div></div><b class="right"></b></div>
        </aside>
    </main>

    <form class="osnap">
        <label><input type="checkbox" checked>End</label>
        <label><input type="checkbox" checked>Near</label>
        <label><input type="checkbox" checked>Point</label>
        <label><input type="checkbox" checked>Mid</label>
        <label><input type="checkbox">Cen</label>
        <label><input type="checkbox" checked>Int</label>
        <label><input type="checkbox" checked>Perp</label>
        <label><input type="checkbox">Tan</label>
        <label><input type="checkbox" checked>Quad</label>
        <label><input type="checkbox">Knot</label>
        <label><input type="checkbox">Vertex</label>
        <label><input type="checkbox" class="push on" checked>Project</label>
        <label><input type="checkbox" class="push">Disable</label>
    </form>

    <footer class="status">
        <span>CPlane</span>
        <span>x 46.163</span>
        <span>y 632.849</span>
        <span>z 0.000</span>
        <span>Millimeters</span>
        <span class="layer"><i></i>array</span>
        <button type="button">Grid Snap</button>
        <button type="button">Ortho</button>
        <button type="button">Planar</button>
        <button type="button" class="on">Osnap</button>
        <button type="button" class="on">SmartTrack</button>
        <button type="button">Gumball</button>
        <button type="button">Record History</button>
        <button type="button">Filter</button>
        <span class="saved">Minutes from last save: 11</span>
        <span></span>
    </footer>

    <div class="taskbar">
        <button type="button" class="pin" aria-label="Start"><svg width="38" height="38" viewBox="0 0 38 38"><circle cx="19" cy="19" r="18" fill="url(#orb)" stroke="#5c8ca8"/><path d="M11 11c3-2 5-2 7-1l-2 8c-2-1-4-1-7 1z" fill="#e8602c"/><path d="M20 10c2 1 5 1 8-1l-2 8c-3 2-6 2-8 1z" fill="#8cc83c"/><path d="M9 20c3-2 5-2 7-1l-2 8c-2-1-4-1-7 1z" fill="#3c9ce0"/><path d="M18 20c2 1 5 1 8-1l-2 8c-3 2-6 2-8 1z" fill="#f8cc38"/></svg></button>
        <button type="button" class="pin" aria-label="Internet Explorer"><svg width="32" height="32" viewBox="0 0 32 32"><path d="M26 21c-2 4-5 6-9 6-6 0-10-4-10-10S11 7 17 7s10 4 10 10.500H12" fill="none" stroke="#2a9ae4" stroke-width="4.500"/><path d="M3 30C-2 25 8 10 20 4c6-3 12-4 10 4M3 30c3 2 7 0 10-2" fill="none" stroke="#e8b420" stroke-width="2"/></svg></button>
        <button type="button" class="pin" aria-label="Explorer"><svg width="32" height="32" viewBox="0 0 32 32"><path d="M0 5l3-2h10l2 2h14l3 2v21H0z" fill="#f3dc8c" stroke="#c8a848"/><path d="M4 3h6v3H4z" fill="#58b848"/><path d="M12 5h8v3h-8z" fill="#fff"/><path d="M20 7h8v3h-8z" fill="#58a0e0"/><path d="M0 10h32v18H0z" fill="#f8e8a8"/><path d="M5 31V20l3-2h16l3 2v11h-5v-7H10v7z" fill="#a8daf0" stroke="#5ca8cc"/></svg></button>
        <button type="button" class="pin" aria-label="Media Player"><svg width="28" height="28" viewBox="0 0 28 28"><path d="M8 3h19v22H8z" fill="#4a90c0" stroke="#a0d0ec"/><path d="M5 2h18v24H5z" fill="#6ab0dc" stroke="#b0dcf0"/><path d="M1 3h20v22H1z" fill="#8ccaf0" stroke="#3a80b0"/><circle cx="12" cy="14" r="8.500" fill="#f07818" stroke="#fff"/><path d="M9 9l8 5-8 5z" fill="#fff"/></svg></button>
        <div class="stack"><button type="button" class="task open" aria-label="Rhinoceros"><svg width="32" height="32"><use href="#rhino"/></svg></button><i></i><i></i></div>
        <button type="button" class="task" aria-label="Rhino options"><svg width="30" height="26"><path d="M.5 1.500h29v24H.5z" fill="#f6f8fa" stroke="#aab"/><path d="M1 1h28v2H1z" fill="#b8c4d8"/><path d="M11 9h13M11 14h13M11 19h13" stroke="#667"/><path d="M4 9h5M7 7v4M4 14h5M7 12v4M4 19h5M7 17v4" stroke="#28b428" stroke-width="1.500"/></svg></button>
        <div class="tray">
            <span class="lang">ES</span>
            <svg width="12" height="16"><path d="M2.500 3.500h7v11h-7z" fill="none" stroke="#fff"/><path d="M4 5h4v8H4zM4 1h4v2H4z" fill="#fff"/></svg>
            <svg width="16" height="16"><path d="M1.500 1v14" stroke="#fff" stroke-width="1.500"/><path d="M3 1c4 0 4 2 9 1v7c-4 1-5-1-9-1z" fill="#fff"/><circle cx="10" cy="11" r="4.500" fill="#d82818"/><path d="M8 9l4 4M12 9l-4 4" stroke="#fff" stroke-width="1.500"/></svg>
            <svg width="16" height="16"><path d="M1 5h3l4-4v14l-4-4H1z" fill="#fff"/><path d="M10 5.500c1.500 1.500 1.500 3.500 0 5M12.500 3.500c2.500 2.500 2.500 6.500 0 9" fill="none" stroke="#fff"/></svg>
            <svg width="16" height="16"><path d="M5.500 4.500h9v7h-9zM7 14.500h7M10.500 12v2M2.500 1v3M.5 3v3h4V3M2.500 6v8.500h3" fill="none" stroke="#fff" stroke-width="1.200"/></svg>
            <time>5:12 PM<br>2/16/2016</time>
            <button type="button" class="peek" aria-label="Show desktop"></button>
        </div>
    </div>
</body>
</html>
```

FILE: styles.css
```css
* {
    box-sizing: border-box;
}

body {
    margin: 0;
    min-height: 100vh;
    display: flex;
    flex-direction: column;
    background-color: #dfe2ea;
    font-family: "Liberation Sans", Arial, sans-serif;
    font-size: 11px;
    color: #000;
}

button {
    margin: 0;
    padding: 0;
    border: none;
    background: none;
    font: inherit;
    color: inherit;
}

a {
    color: inherit;
    text-decoration: none;
}

svg {
    display: block;
    flex: none;
}

.sprite {
    position: absolute;
    width: 0;
    height: 0;
}

/* Mac menu bar */

.mac-bar {
    height: 22px;
    padding: 0 20px 0 19px;
    display: flex;
    align-items: center;
    background-color: #fff;
    border-bottom: 1px solid #8a8a8a;
    font-family: "Open Sans", sans-serif;
    font-size: 14px;
}

.mac-menu {
    display: flex;
    gap: 21px;
    margin-left: 18px;
}

.mac-menu .current {
    font-weight: bold;
}

.mac-tray {
    margin-left: auto;
    display: flex;
    align-items: center;
    gap: 14px;
}

.mac-tray .battery {
    font-size: 12px;
    margin-right: -10px;
}

.mac-tray .wifi {
    margin-left: 5px;
    margin-right: -2px;
}

.mac-tray time {
    margin-right: 4px;
}

/* VM window bar */

.vm-bar {
    height: 35px;
    padding: 0 11px 0 8px;
    display: grid;
    grid-template-columns: 1fr auto 1fr;
    align-items: center;
    background: linear-gradient(#e4e4e4, #b4b4b4);
}

.vm-title {
    font-size: 16px;
    color: #444;
}

.lights {
    display: flex;
    gap: 8px;
}

.lights span {
    width: 12px;
    height: 12px;
    border: 1px solid #6c737c;
    border-radius: 50%;
    background: linear-gradient(#8d97a3, #d6dee6);
}

.vm-tools {
    display: flex;
    align-items: center;
    justify-content: flex-end;
    gap: 11px;
}

.vm-tools svg:last-child {
    margin-left: -5px;
}

.vm-tools i {
    width: 1px;
    height: 15px;
    background-color: #888;
}

/* Rhino title bar */

.win-title {
    height: 21px;
    display: flex;
    align-items: center;
    background:
        radial-gradient(ellipse 22px 16px at 556px 17px, #7fb0dc, transparent),
        radial-gradient(ellipse 22px 16px at 644px 18px, #5d88b0, transparent),
        radial-gradient(ellipse 24px 12px at 412px 20px, #4d84bc, transparent),
        linear-gradient(to right, #8fa3bb 0, #93a7bf 290px, transparent 370px),
        linear-gradient(to left, #8fa6be 0, #8298ae 105px, transparent 230px),
        linear-gradient(#14212e 70%, #2d4a6c);
    border-bottom: 1px solid #3c4a5e;
    font-family: Roboto, sans-serif;
}

.win-title h1 {
    margin: 0 auto 0 6px;
    font-size: 12px;
    font-weight: normal;
}

.win-buttons {
    align-self: flex-start;
    display: flex;
    margin-right: 2px;
    border: 1px solid #e4ecf4;
    border-top: none;
    border-radius: 0 0 5px 5px;
    overflow: hidden;
}

.win-buttons button {
    width: 27px;
    height: 17px;
    display: flex;
    align-items: center;
    justify-content: center;
    border-right: 1px solid #dde5ee;
    background: linear-gradient(#c0cad6 50%, #7e8fa3 50%, #a4b4c6);
}

.win-buttons .close {
    width: 47px;
    border-right: none;
    background: linear-gradient(#dc9484 45%, #b83420 50%, #d86c50);
}

.app-menu {
    height: 20px;
    padding: 2px 7px 0;
    display: flex;
    gap: 13px;
    background: linear-gradient(#fff, #eef1f9 40%, #d5dbee 45%, #e0e5f4);
    border-bottom: 1px solid #b4bccc;
    font-family: Roboto, sans-serif;
    font-size: 12px;
    line-height: 18px;
}

/* Command area */

.command {
    margin: 4px 1px 0 3px;
    padding-left: 3px;
    border-left: 2px double #a8b0bf;
    font-size: 12px;
}

.history {
    display: flex;
    background-color: #fff;
    border-bottom: 1px solid #9aa0ae;
}

.history .lines {
    flex: 1;
}

.history p {
    margin: 0;
    line-height: 15px;
}

.scroll-v {
    width: 16px;
    padding: 7px 0 6px;
    display: flex;
    flex-direction: column;
    align-items: center;
    justify-content: space-between;
    background-color: #f0f0f0;
}

.up, .down {
    border: 3px solid transparent;
    width: 0;
    height: 0;
}

.up {
    border-top: none;
    border-bottom-color: #333;
}

.down {
    border-bottom: none;
    border-top-color: #333;
}

.prompt {
    height: 18px;
    display: flex;
    align-items: center;
    background-color: #fff;
}

.prompt label {
    font-weight: bold;
}

.entry {
    flex: 1;
    position: relative;
    padding-left: 3px;
    align-self: stretch;
}

.entry input {
    display: block;
    width: 100%;
    height: 16px;
    padding: 0;
    border: none;
    outline: none;
    background: none;
    font: inherit;
}

.suggest {
    position: absolute;
    z-index: 5;
    top: 100%;
    left: 1px;
    width: 124px;
    margin: 0;
    padding: 0 1px;
    list-style: none;
    background-color: #fff;
    border: 1px solid #e4e4e4;
    font-size: 11px;
}

.suggest li {
    height: 13px;
    line-height: 13px;
    padding-left: 1px;
}

.suggest .focus {
    outline: 1px dotted #000;
}

.spin {
    width: 16px;
    display: flex;
    flex-direction: column;
    gap: 1px;
}

.spin button {
    height: 8px;
    width: 14px;
    display: flex;
    align-items: center;
    justify-content: center;
    border: 1px solid #b4bac8;
}

.spin .up {
    border-bottom-color: #2c4aa0;
}

.spin .down {
    border-top-color: #2c4aa0;
}

/* Toolbar tabs */

.toolbars {
    margin-top: 3px;
    padding-top: 5px;
    border-top: 1px solid #c0c6d2;
}

.tool-tabs {
    height: 14px;
    padding-left: 7px;
    display: flex;
    border-bottom: 1px solid #9aa4b4;
}

.tool-tabs .options {
    margin: -2px 1px 0 auto;
}

.tool-tabs button {
    position: relative;
    z-index: 0;
    padding: 0 8px 0 9px;
    line-height: 14px;
    white-space: nowrap;
}

.tool-tabs .blank {
    width: 58px;
}

.tool-tabs button::before,
.tool-tabs button::after {
    content: "";
    position: absolute;
    z-index: -1;
    top: 0;
    bottom: 0;
    background-color: #d3daeb;
    border-top: 1px solid #98a2b2;
}

.tool-tabs button::before {
    left: 0;
    right: 50%;
    border-left: 1px solid #98a2b2;
    transform: skewX(-30deg);
    transform-origin: bottom left;
}

.tool-tabs button::after {
    left: 40%;
    right: 0;
    border-right: 1px solid #98a2b2;
    border-top-right-radius: 4px;
}

.tool-tabs .active::before,
.tool-tabs .active::after {
    background-color: #fff;
}

.tools {
    height: 38px;
    padding: 1px 7px 0;
    display: flex;
    align-items: flex-start;
    background: linear-gradient(#f6f7f9, #dfe2ea 85%);
}

.tools button svg {
    width: 28px;
    height: 28px;
}

.tools i {
    width: 1px;
    height: 24px;
    margin: 3px 1px 0 4px;
    background: linear-gradient(#dde, #999, #dde);
}

/* Workspace */

.workspace {
    flex: 1;
    display: flex;
}

.palette {
    width: 63px;
    padding-right: 7px;
    display: grid;
    grid-template-columns: 28px 28px;
    align-content: start;
}

.palette::before {
    content: "";
    grid-column: 1 / -1;
    height: 3px;
    margin: 2px 0 0 3px;
    border-top: 1px solid #b0b7c6;
    border-bottom: 1px solid #b0b7c6;
}

.palette button {
    position: relative;
    height: 28px;
}

.palette button svg {
    width: 28px;
    height: 28px;
}

.palette .more::after {
    content: "";
    position: absolute;
    right: 0;
    bottom: 0;
    border: 3px solid #666;
    border-top-color: transparent;
    border-left-color: transparent;
}

.letter {
    font: bold 24px "Liberation Serif", serif;
    fill: #6c8cf4;
    stroke: #1a2a60;
}

.view {
    flex: 1;
    display: flex;
    flex-direction: column;
}

.canvas {
    position: relative;
    flex: 1;
    background-color: #9da3aa;
    border-top: 1px solid #868e98;
    border-left: 1px solid #868e98;
    overflow: hidden;
}

.canvas > svg {
    position: absolute;
    inset: 0;
}

.view-name {
    display: block;
    width: 34px;
    height: 18px;
    background-color: #86a2c0;
}

.axis {
    font: bold 12px "DejaVu Sans Mono", monospace;
    fill: #555;
}

.view-tabs {
    height: 22px;
    padding-bottom: 1px;
    display: flex;
    overflow: hidden;
    border-top: 1px solid #9aa4b4;
    font-family: "Open Sans", sans-serif;
}

.view-tabs button {
    position: relative;
    z-index: 0;
    padding: 0 8px 2px 11px;
}

.view-tabs button::before,
.view-tabs button::after {
    content: "";
    position: absolute;
    z-index: -1;
    top: 0;
    bottom: 0;
    background-color: #d3daeb;
    border-bottom: 1px solid #98a2b2;
}

.view-tabs button::before {
    left: 8px;
    right: 40%;
    border-left: 1px solid #98a2b2;
    transform: skewX(32deg);
    transform-origin: bottom left;
}

.view-tabs button::after {
    left: 50%;
    right: 0;
    border-right: 1px solid #98a2b2;
    border-bottom-right-radius: 4px;
}

.view-tabs .active {
    z-index: 1;
}

.view-tabs .active::before,
.view-tabs .active::after {
    background-color: #fff;
}

.view-tabs .add {
    padding-right: 9px;
    padding-left: 12px;
}

.view-tabs .add::before,
.view-tabs .add::after {
    background-color: #dfe2ea;
}

/* Layers panel */

.panel {
    width: 408px;
    margin: 3px 0 3px 7px;
    display: flex;
    flex-direction: column;
}

.grip {
    height: 3px;
    margin-right: 2px;
    border-top: 1px solid #a8b0c0;
    border-bottom: 1px solid #a8b0c0;
}

.panel-tabs {
    height: 23px;
    padding-top: 2px;
    display: flex;
    border-bottom: 1px solid #9aa4b4;
}

.panel-tabs .options {
    margin: 5px 1px 0 auto;
}

.panel-tabs button {
    position: relative;
    z-index: 0;
    padding: 0 9px 0 4px;
    display: flex;
    align-items: center;
    gap: 3px;
    white-space: nowrap;
}

.panel-tabs button::before,
.panel-tabs button::after {
    content: "";
    position: absolute;
    z-index: -1;
    top: 0;
    bottom: 0;
    background-color: #d3daeb;
    border-top: 1px solid #98a2b2;
}

.panel-tabs button::before {
    left: 0;
    right: 30%;
    border-left: 1px solid #98a2b2;
    border-top-left-radius: 4px;
}

.panel-tabs button::after {
    left: 50%;
    right: -7px;
    border-right: 1px solid #98a2b2;
    transform: skewX(38deg);
    transform-origin: bottom right;
}

.panel-tabs .active {
    z-index: 1;
    margin-bottom: -1px;
}

.panel-tabs .active::before,
.panel-tabs .active::after {
    background-color: #f6f7fa;
}

.panel-tools {
    height: 22px;
    padding-left: 2px;
    display: flex;
    align-items: center;
    gap: 5px;
    background-color: #f4f5f8;
    border-left: 1px solid #9aa4b4;
    border-right: 1px solid #9aa4b4;
}

.q {
    font: bold 11px "Liberation Sans", sans-serif;
    fill: #fff;
    text-anchor: middle;
}

.layers {
    flex: 1;
    background-color: #fff;
    border: 1px solid #9aa4b4;
    border-bottom: none;
}

table {
    width: 100%;
    table-layout: fixed;
    border-collapse: separate;
    border-spacing: 0;
}

.n {
    width: 17px;
}

.w {
    width: 80px;
}

.e {
    width: 19px;
}

th {
    height: 23px;
    padding: 0 6px;
    text-align: left;
    font-weight: normal;
    background: linear-gradient(#fff 50%, #f3f5f8 50%);
    border-right: 1px solid #e2e6ec;
    border-bottom: 1px solid #d5d9e0;
}

td {
    height: 17px;
    padding: 0 3px;
    line-height: 16px;
    border-bottom: 1px dotted #dcdcdc;
}

td svg {
    margin: 0 -1px;
}

.l0 {
    padding-left: 6px;
}

.l1 {
    padding-left: 20px;
}

.l3 {
    padding-left: 48px;
}

.bold td {
    font-weight: bold;
}

.dim {
    color: #777;
}

.fold {
    display: inline-block;
    width: 9px;
    height: 9px;
    margin-right: 6px;
    vertical-align: -1px;
    border: 1px solid #7f95b2;
    background: linear-gradient(#333, #333) center / 5px 1px no-repeat #eef2f6;
}

.plus {
    background: linear-gradient(#333, #333) center / 5px 1px no-repeat, linear-gradient(#333, #333) center / 1px 5px no-repeat #eef2f6;
}

.box {
    display: block;
    width: 12px;
    height: 12px;
    margin-left: -1px;
    background-color: var(--c, #000);
    border: 1px solid #000;
}

.mat {
    display: block;
    width: 13px;
    height: 13px;
    border: 1px solid #eee;
    border-radius: 50%;
    background-color: #fff;
}

.dia {
    display: block;
    width: 9px;
    height: 9px;
    margin-left: 1px;
    background-color: var(--c, #000);
    border: 1px solid #000;
    transform: rotate(45deg);
}

.crimson { --c: #ff0020; }
.lime { --c: #70ff00; }
.azure { --c: #0080ff; }
.cyan { --c: #00f8ff; }
.orange { --c: #ff5a00; }
.blue { --c: #2000ff; }
.red { --c: #ff0000; }
.green { --c: #00ff00; }

.selected td {
    color: #fff;
    background-color: #3399ff;
    border-bottom-color: #cfe4fb;
}

.selected .box,
.selected .dia {
    outline: 1px solid #fff;
    outline-offset: -1px;
}

.scroll-h {
    height: 17px;
    padding: 0 5px;
    display: flex;
    align-items: center;
    background-color: #f0f0f0;
    border: 1px solid #9aa4b4;
    border-top: none;
}

.left, .right {
    border: 3px solid transparent;
}

.left {
    border-left: none;
    border-right-color: #333;
}

.right {
    border-right: none;
    border-left-color: #333;
}

.track {
    flex: 1;
    margin: 0 10px;
}

.thumb {
    width: 84%;
    height: 15px;
    display: flex;
    align-items: center;
    justify-content: center;
    border: 1px solid #979797;
    border-radius: 2px;
    background: linear-gradient(#f4f4f4 45%, #dcdcdc 50%, #d0d0d0);
}

.thumb i {
    width: 8px;
    height: 7px;
    background: repeating-linear-gradient(to right, #555 0 1px, transparent 1px 3px);
}

/* Object snaps */

.osnap {
    height: 31px;
    margin: 5px 3px 4px;
    padding: 0 6px;
    display: flex;
    align-items: center;
    gap: 6px;
    border-left: 2px double #a8b0bf;
}

.osnap label {
    display: flex;
    align-items: center;
    gap: 5px;
    margin-top: -8px;
}

.osnap input {
    appearance: none;
    position: relative;
    width: 13px;
    height: 13px;
    margin: 0;
    border: 1px solid #8e8f8f;
    background: linear-gradient(135deg, #c4c8d0, #fff);
    box-shadow: inset 0 0 0 1px #f4f4f4;
}

.osnap input:checked::after {
    content: "";
    position: absolute;
    left: 4px;
    top: 1px;
    width: 4px;
    height: 8px;
    border: solid #3a4f9c;
    border-width: 0 2px 2px 0;
    transform: rotate(35deg);
}

.osnap .push {
    width: 15px;
    height: 15px;
    margin-right: -1px;
    border-radius: 3px;
    border-color: #707070;
    background: linear-gradient(#f4f4f4 50%, #d8d8d8 50%);
}

.osnap .on {
    border-color: #2c628b;
    background: #8f8f8f;
    box-shadow: inset 0 0 0 1px #6ca8cc;
}

.osnap .on:checked::after {
    display: none;
}

/* Status bar */

.status {
    height: 20px;
    display: grid;
    grid-template-columns: 57px 88px 88px 88px 88px minmax(100px, 1fr) 76px 47px 54px 54px 85px 66px 109px 45px 155px 7px;
    border-top: 1px solid #9aa4b4;
    font-size: 12px;
    line-height: 20px;
    text-align: center;
    white-space: nowrap;
}

.status > * {
    border-right: 1px solid #9aa4b4;
}

.status .on {
    font-weight: bold;
    background-color: #e2f1fc;
}

.status .layer {
    padding-left: 4px;
    display: flex;
    align-items: center;
    gap: 2px;
}

.status .layer i {
    width: 14px;
    height: 14px;
    background-color: #000;
}

.status .saved {
    padding-left: 3px;
    text-align: left;
}

/* Taskbar */

.taskbar {
    height: 44px;
    display: flex;
    align-items: center;
    background: linear-gradient(#3a4654, #0a0f18 3px, #080c14);
    border-top: 1px solid #111;
    border-bottom: 4px solid #666;
    color: #fff;
}

.pin {
    width: 61px;
    display: flex;
    justify-content: center;
}

.pin:first-child {
    width: 58px;
    padding-right: 3px;
}

.stack {
    margin-left: 5px;
    display: flex;
}

.stack i {
    width: 4px;
    height: 38px;
    border: 1px solid #555;
    border-left: none;
    background-color: #222;
}

.task {
    width: 58px;
    height: 38px;
    display: flex;
    align-items: center;
    justify-content: center;
    border: 1px solid #777;
    border-radius: 2px;
    background: linear-gradient(135deg, #777, #22272c 50%, #16191c);
}

.task.open {
    width: 50px;
    border-color: #ccc;
    background: linear-gradient(160deg, #eee, #888 50%, #999);
}

.stack + .task {
    margin-left: 4px;
}

.tray {
    margin-left: auto;
    height: 100%;
    display: flex;
    align-items: center;
    gap: 8px;
    font-family: "Open Sans", sans-serif;
}

.lang {
    margin: 0 10px 4px 0;
    font-size: 12px;
}

.tray time {
    margin-left: 10px;
    line-height: 16px;
    text-align: center;
}

.peek {
    width: 14px;
    height: 38px;
    margin-right: 1px;
    border: 1px solid #555;
    background: linear-gradient(135deg, #444, #0a0f14 60%);
}
```
